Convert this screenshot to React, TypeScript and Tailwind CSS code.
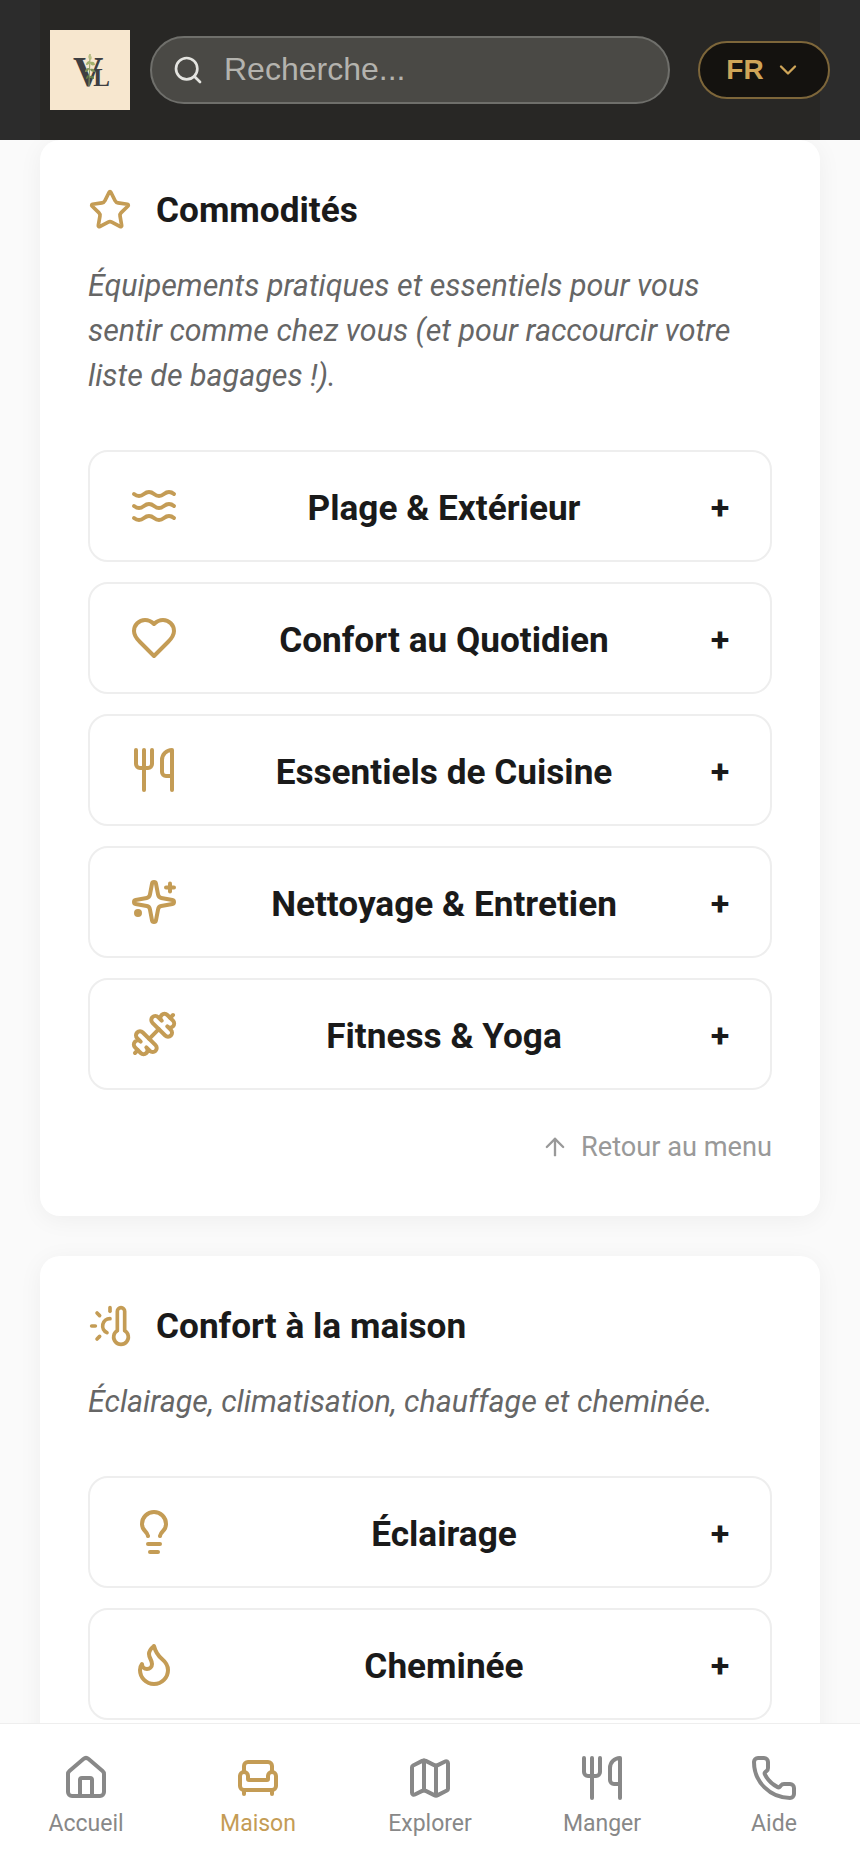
import {
  Armchair,
  ArrowUp,
  ChevronDown,
  Dumbbell,
  Flame,
  House,
  Lightbulb,
  Map,
  Phone,
  Search,
  Star,
  ThermometerSun,
  Utensils,
  Waves,
} from "lucide-react";
import type { LucideIcon } from "lucide-react";

type IconLike = LucideIcon | typeof HeartIcon;

// the reference has the pointed heart, not the one lucide 0.562 ships
function HeartIcon({ size, strokeWidth, className }: { size?: number; strokeWidth?: number; className?: string }) {
  return (
    <svg width={size} height={size} viewBox="0 0 24 24" fill="none" stroke="currentColor" strokeWidth={strokeWidth} strokeLinecap="round" strokeLinejoin="round" className={className}>
      <path d="M19 14c1.49-1.46 3-3.21 3-5.5A5.5 5.5 0 0 0 16.5 3c-1.76 0-3 .5-4.5 2-1.5-1.5-2.74-2-4.5-2A5.5 5.5 0 0 0 2 8.5c0 2.3 1.5 4.05 3 5.5l7 7Z" />
    </svg>
  );
}

function SparkleIcon({ size, strokeWidth, className }: { size?: number; strokeWidth?: number; className?: string }) {
  return (
    <svg width={size} height={size} viewBox="0 0 24 24" fill="none" stroke="currentColor" strokeWidth={strokeWidth} strokeLinecap="round" strokeLinejoin="round" className={className}>
      <path d="M11.017 2.814a1 1 0 0 1 1.966 0l1.051 5.558a2 2 0 0 0 1.594 1.594l5.558 1.051a1 1 0 0 1 0 1.966l-5.558 1.051a2 2 0 0 0-1.594 1.594l-1.051 5.558a1 1 0 0 1-1.966 0l-1.051-5.558a2 2 0 0 0-1.594-1.594l-5.558-1.051a1 1 0 0 1 0-1.966l5.558-1.051a2 2 0 0 0 1.594-1.594z" />
      <path d="M20 2.7v4" />
      <path d="M22 4.7h-4" />
      <circle cx="4" cy="17.5" r="1" fill="currentColor" />
    </svg>
  );
}

const sections: {
  icon: IconLike;
  title: string;
  description: string;
  items: { icon: IconLike; label: string }[];
  backLink?: boolean;
}[] = [
  {
    icon: Star,
    title: "Commodités",
    description:
      "Équipements pratiques et essentiels pour vous sentir comme chez vous (et pour raccourcir votre liste de bagages !).",
    items: [
      { icon: Waves, label: "Plage & Extérieur" },
      { icon: HeartIcon, label: "Confort au Quotidien" },
      { icon: Utensils, label: "Essentiels de Cuisine" },
      { icon: SparkleIcon, label: "Nettoyage & Entretien" },
      { icon: Dumbbell, label: "Fitness & Yoga" },
    ],
    backLink: true,
  },
  {
    icon: ThermometerSun,
    title: "Confort à la maison",
    description: "Éclairage, climatisation, chauffage et cheminée.",
    items: [
      { icon: Lightbulb, label: "Éclairage" },
      { icon: Flame, label: "Cheminée" },
    ],
  },
];

const navItems = [
  { icon: House, label: "Accueil" },
  { icon: Armchair, label: "Maison", active: true },
  { icon: Map, label: "Explorer" },
  { icon: Utensils, label: "Manger" },
  { icon: Phone, label: "Aide" },
];

function Logo() {
  return (
    <div className="relative h-20 w-20 shrink-0 bg-[#f7e7cf]">
      <span className="absolute left-[23px] top-[21px] font-['Liberation_Serif',serif] text-[42px] font-bold leading-none tracking-[-10px] text-[#3f3f42]">
        V<span className="text-[25px]">L</span>
      </span>
      <svg className="absolute left-[30px] top-[23px]" width="20" height="34" viewBox="0 0 20 34" fill="none">
        <path d="M9 33C9 24 10 12 10 1" stroke="#8b9a5b" strokeWidth="1" />
        <path d="M10 1c-2 1-2 3-1 5 2-1 2-3 1-5ZM10 2c2 1 2 3 1 5-2-1-2-3-1-5Z" fill="#b3bf7a" />
        <path d="M10 8c-3 0-4 2-4 4 3 0 4-2 4-4ZM10 9c3-1 5 0 5 3-3 1-5 0-5-3Z" fill="#a3b06c" />
        <path d="M9 15c-3 0-4 2-4 4 3 0 4-2 4-4ZM10 16c3-1 5 0 5 3-3 0-5-1-5-3Z" fill="#7d9156" />
        <path d="M9 22c-2 0-3 2-3 4 2 0 3-2 3-4ZM10 23c3-1 4 0 4 3-2 0-4-1-4-3Z" fill="#5f7a45" />
      </svg>
    </div>
  );
}

function Header() {
  return (
    <header className="relative z-10 flex h-[140px] shrink-0 items-center bg-[#2c2c2c] pl-[50px] pr-[30px]">
      <div className="absolute inset-y-0 left-10 right-10 bg-[#282725]" />
      <div className="relative flex w-full items-center">
        <Logo />
        <div className="ml-5 flex h-[68px] w-[520px] items-center rounded-full border-2 border-[#6f6f6b] bg-[#4a4945] pl-[20px]">
          <Search size={32} strokeWidth={2} className="text-[#e4e4e0]" />
          <span className="ml-[20px] pb-[2px] font-['Liberation_Sans',sans-serif] text-[32px] leading-none text-[#b4b3ae]">
            Recherche...
          </span>
        </div>
        <div className="ml-7 flex h-[58px] w-[132px] items-center justify-center gap-[10px] rounded-full border-2 border-[#7d663a] bg-[#14120f]">
          <span className="font-['Liberation_Sans',sans-serif] text-[28px] font-bold leading-none text-[#cfa558]">FR</span>
          <ChevronDown size={28} strokeWidth={2} className="text-[#cfa558]" />
        </div>
      </div>
    </header>
  );
}

function Row({ icon: Icon, label }: { icon: IconLike; label: string }) {
  return (
    <div className="flex h-[112px] items-center rounded-[20px] border-2 border-[#eeeeee] bg-white px-10">
      <Icon size={48} strokeWidth={2} className="shrink-0 text-[#c49c55]" />
      <span className="flex-1 pt-[6px] text-center text-[35.2px] font-bold leading-none text-[#1a1a1a]">{label}</span>
      <span className="w-5 pt-[2px] text-center text-[34px] font-bold leading-none text-[#1a1a1a]">+</span>
    </div>
  );
}

function Card({ section }: { section: (typeof sections)[number] }) {
  const TitleIcon = section.icon;
  return (
    <section className="rounded-[20px] bg-white p-12 shadow-[0_4px_24px_rgba(0,0,0,0.05)]">
      <div className="flex items-center gap-6">
        <TitleIcon size={44} strokeWidth={2} className="text-[#c49c55]" />
        <h2 className="pt-[2px] text-[35.2px] font-bold leading-none text-[#1a1a1a]">{section.title}</h2>
      </div>
      <p className="mt-[31px] text-[30.4px] italic leading-[45px] text-[#666666]">{section.description}</p>
      <div className="mt-[52px] flex flex-col gap-5">
        {section.items.map((item) => (
          <Row key={item.label} icon={item.icon} label={item.label} />
        ))}
      </div>
      {section.backLink && (
        <div className="mt-9 flex h-[42px] items-center justify-end gap-3 text-[27.2px] text-[#999999]">
          <ArrowUp size={28} strokeWidth={2} />
          <span>Retour au menu</span>
        </div>
      )}
    </section>
  );
}

function BottomNav() {
  return (
    <nav className="z-10 grid h-[147px] shrink-0 grid-cols-5 border-t border-[#eeeeee] bg-white pt-[30px]">
      {navItems.map(({ icon: Icon, label, active }) => (
        <div key={label} className={`flex flex-col items-center ${active ? "text-[#c49c55]" : "text-[#888888]"}`}>
          <Icon size={48} strokeWidth={2} />
          <span className="mt-[6px] text-[23px] leading-[31px]">{label}</span>
        </div>
      ))}
    </nav>
  );
}

export default function App() {
  return (
    <div className="flex h-[1870px] w-[860px] flex-col overflow-hidden bg-[#fafafa] font-['Roboto',sans-serif]">
      <Header />
      <main className="flex min-h-0 flex-1 flex-col gap-10 overflow-hidden px-10">
        {sections.map((section) => (
          <Card key={section.title} section={section} />
        ))}
      </main>
      <BottomNav />
    </div>
  );
}
